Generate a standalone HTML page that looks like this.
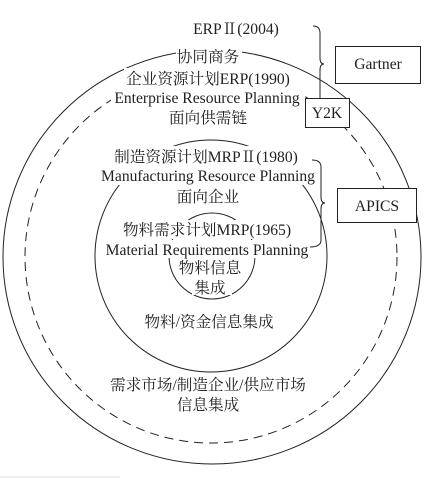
<!DOCTYPE html>
<html><head><meta charset="utf-8"><style>
html,body{margin:0;padding:0;background:#fff;width:437px;height:478px;overflow:hidden}
svg text{font-family:"Liberation Serif","Noto Serif CJK SC",serif;font-size:15.6px;fill:#222;text-anchor:middle}
</style></head><body>
<svg width="437" height="478" viewBox="0 0 437 478" xmlns="http://www.w3.org/2000/svg">
<g fill="none" stroke="#222" stroke-width="1">
<ellipse cx="212" cy="257" rx="209" ry="207"/>
<circle cx="211" cy="257" r="186" stroke-dasharray="9,6"/>
<circle cx="211" cy="256" r="116"/>
<circle cx="212" cy="256" r="43"/>
</g>
<g fill="#fff" stroke="none">
<rect x="176" y="47" width="66" height="17"/>
<rect x="124" y="68" width="168" height="20"/>
<rect x="111" y="88" width="193" height="19"/>
<rect x="170" y="108" width="76" height="19"/>
<rect x="113" y="146" width="186" height="20"/>
<rect x="98" y="166" width="220" height="19"/>
<rect x="176" y="187" width="64" height="19"/>
<rect x="121" y="220" width="173" height="19"/>
<rect x="103" y="240" width="208" height="18"/>
<rect x="176" y="258" width="72" height="19"/>
<rect x="192" y="278" width="40" height="17"/>
</g>
<g fill="none" stroke="#222" stroke-width="1">
<path d="M313 26 Q320 26 320 33 L320 58 Q320 64 324 64 Q320 64 320 70 L320 98"/>
<path d="M312 160 Q321 160 321 167 L321 197 Q321 203 325 203 Q321 203 321 209 L321 240 Q321 247 310 247"/>
<rect x="335.5" y="46.5" width="85" height="37"/>
<rect x="305.5" y="98.5" width="44" height="29" fill="#fff"/>
<rect x="337.5" y="188.5" width="79" height="34" fill="#fff"/>
</g>
<line x1="0" y1="477" x2="120" y2="477" stroke="#ddd"/>
<text x="236" y="34">ERPⅡ(2004)</text>
<text x="208" y="62">协同商务</text>
<text x="208" y="84">企业资源计划ERP(1990)</text>
<text x="207" y="103">Enterprise Resource Planning</text>
<text x="208" y="123">面向供需链</text>
<text x="206" y="162">制造资源计划MRPⅡ(1980)</text>
<text x="208" y="181">Manufacturing Resource Planning</text>
<text x="208" y="202">面向企业</text>
<text x="207" y="235">物料需求计划MRP(1965)</text>
<text x="207" y="255">Material Requirements Planning</text>
<text x="210" y="273">物料信息</text>
<text x="210" y="293">集成</text>
<text x="209" y="327">物料/资金信息集成</text>
<text x="208" y="390">需求市场/制造企业/供应市场</text>
<text x="208" y="410">信息集成</text>
<text x="378" y="69">Gartner</text>
<text x="327" y="118">Y2K</text>
<text x="377" y="211">APICS</text>
</svg>
</body></html>
